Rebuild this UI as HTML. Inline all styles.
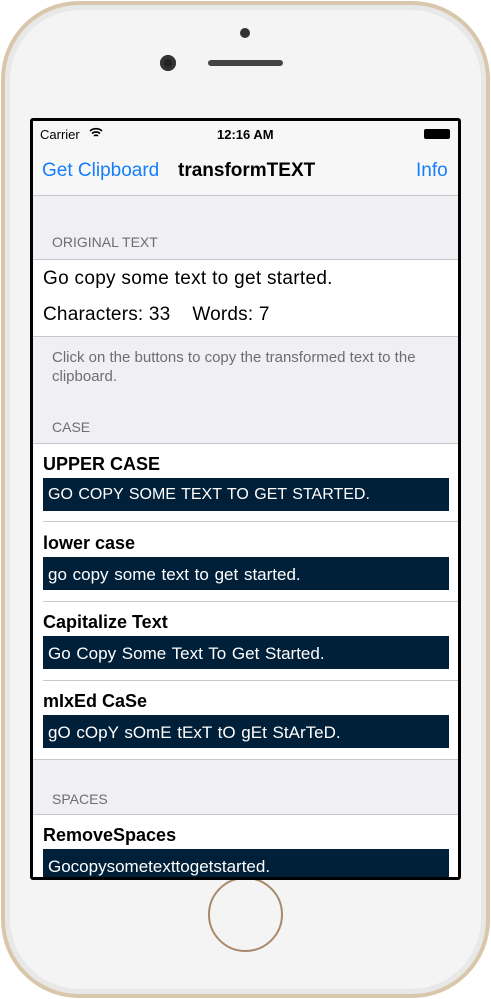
<!DOCTYPE html>
<html><head><style>
*{margin:0;padding:0;box-sizing:border-box}
body{width:491px;height:999px;background:#fff;position:relative;overflow:hidden;font-family:"Liberation Sans",sans-serif}
.phone{position:absolute;left:1px;top:1px;width:489px;height:997px;border-radius:78px;background:#d9c7ab;}
.phone2{position:absolute;left:5px;top:5px;width:481px;height:989px;border-radius:74px;background:#e8e8e8;}
.phone3{position:absolute;left:10px;top:10px;width:471px;height:979px;border-radius:70px;background:#f4f4f4;}
.scr{position:absolute;left:30px;top:118px;width:431px;height:762px;background:#000;border-radius:3px}
.in{position:absolute;left:33px;top:121px;width:425px;height:756px;background:#efeff4;overflow:hidden}
.abs{position:absolute}
.box{position:absolute;left:10px;width:406px;height:33px;background:#002039;color:#fff;font-size:17px;padding:8px 0 0 5px;word-spacing:1px}
.lbl{position:absolute;left:10px;font-size:18px;font-weight:bold;color:#000}
.hdr{position:absolute;left:19px;font-size:14px;color:#6d6d72}
</style></head><body>
<div class="phone"></div><div class="phone2"></div><div class="phone3"></div>
<div class="abs" style="left:240px;top:28px;width:10px;height:10px;border-radius:5px;background:#333"></div>
<div class="abs" style="left:160px;top:55px;width:16px;height:16px;border-radius:8px;background:#222;box-shadow:inset 0 0 0 4px #333"></div>
<div class="abs" style="left:208px;top:60px;width:75px;height:6px;border-radius:3px;background:#444"></div>
<div class="abs" style="left:208px;top:877px;width:75px;height:75px;border-radius:50%;border:2px solid #a88a6c"></div>
<div class="scr"></div>
<div class="in">
 <div class="abs" style="left:0;top:0;width:425px;height:75px;background:#f7f7f7;border-bottom:1px solid #c8c7cc"></div>
 <div class="abs" style="left:7px;top:6px;font-size:13px">Carrier</div>
 <svg class="abs" style="left:56px;top:6px" width="14" height="11" viewBox="0 0 14 11"><path d="M1 4a9 9 0 0 1 12 0M3 6.5a6 6 0 0 1 8 0M5 9a3 3 0 0 1 4 0" stroke="#000" stroke-width="1.6" fill="none"/></svg>
 <div class="abs" style="left:184px;top:6px;font-size:13px;font-weight:bold">12:16 AM</div>
 <div class="abs" style="left:391px;top:8px;width:26px;height:10px;background:#000;border-radius:2px"></div>
 <div class="abs" style="left:9px;top:39px;font-size:19px;color:#157efb">Get Clipboard</div>
 <div class="abs" style="left:145px;top:39px;font-size:19px;font-weight:bold">transformTEXT</div>
 <div class="abs" style="left:383px;top:39px;font-size:19px;color:#157efb">Info</div>
 <div class="hdr" style="top:113px">ORIGINAL TEXT</div>
 <div class="abs" style="left:0;top:138px;width:425px;height:78px;background:#fff;border-top:1px solid #c8c7cc;border-bottom:1px solid #c8c7cc"></div>
 <div class="abs" style="left:10px;top:147px;font-size:19px;letter-spacing:0.3px">Go copy some text to get started.</div>
 <div class="abs" style="left:10px;top:183px;font-size:19px;letter-spacing:0.2px">Characters: 33&nbsp;&nbsp;&nbsp;&nbsp;Words: 7</div>
 <div class="abs" style="left:19px;top:227px;font-size:15px;color:#6d6d72;width:405px;line-height:19px">Click on the buttons to copy the transformed text to the clipboard.</div>
 <div class="hdr" style="top:298px">CASE</div>
 <div class="abs" style="left:0;top:322px;width:425px;height:317px;background:#fff;border-top:1px solid #c8c7cc;border-bottom:1px solid #c8c7cc"></div>
 <div class="lbl" style="top:333px">UPPER CASE</div><div class="box" style="top:357px;font-size:16px">GO COPY SOME TEXT TO GET STARTED.</div>
 <div class="abs" style="left:10px;top:400px;width:415px;height:1px;background:#c8c7cc"></div>
 <div class="lbl" style="top:412px">lower case</div><div class="box" style="top:436px">go copy some text to get started.</div>
 <div class="abs" style="left:10px;top:480px;width:415px;height:1px;background:#c8c7cc"></div>
 <div class="lbl" style="top:491px">Capitalize Text</div><div class="box" style="top:515px">Go Copy Some Text To Get Started.</div>
 <div class="abs" style="left:10px;top:559px;width:415px;height:1px;background:#c8c7cc"></div>
 <div class="lbl" style="top:570px">mIxEd CaSe</div><div class="box" style="top:594px">gO cOpY sOmE tExT tO gEt StArTeD.</div>
 <div class="hdr" style="top:670px">SPACES</div>
 <div class="abs" style="left:0;top:693px;width:425px;height:70px;background:#fff;border-top:1px solid #c8c7cc"></div>
 <div class="lbl" style="top:704px">RemoveSpaces</div><div class="box" style="top:728px">Gocopysometexttogetstarted.</div>
</div>
</body></html>
